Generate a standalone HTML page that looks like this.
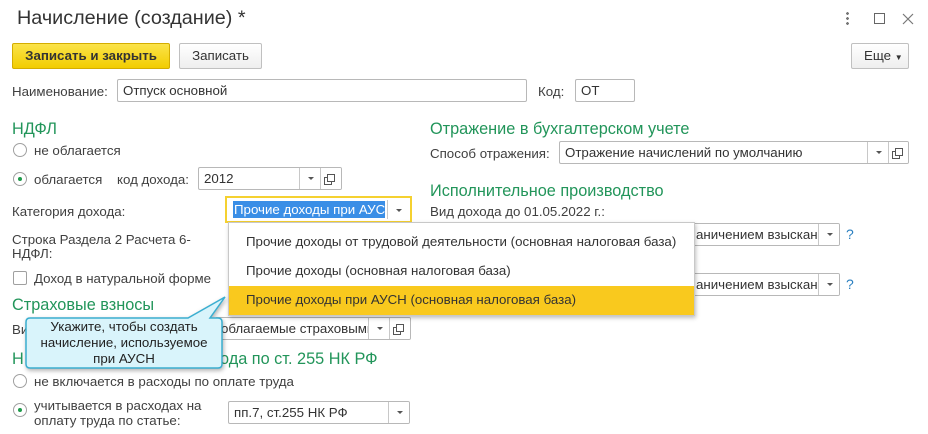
<!DOCTYPE html>
<html><head><meta charset="utf-8"><style>
*{box-sizing:border-box;margin:0;padding:0}
body{width:928px;height:434px;background:#fff;position:relative;overflow:hidden;font-family:"Liberation Sans",sans-serif;font-size:13.3px;color:#404040}
.a{position:absolute;white-space:nowrap}
.g{color:#22955a;font-size:16.3px}
.inp{position:absolute;border:1px solid #b8b8b8;border-radius:2px;background:#fff;height:23px;line-height:21px;padding-left:5px;color:#333;overflow:hidden;white-space:nowrap}
.btn{position:absolute;top:0;height:21px;width:21px;border-left:1px solid #c8c8c8;background:#fff}
.dd::after{content:"";position:absolute;left:8px;top:9px;border:3px solid transparent;border-top:3px solid #555}
.op::after{content:"";position:absolute;left:6px;top:6px;width:6px;height:6px;border:1px solid #555;box-shadow:-3px 3px 0 -1px #fff,-3px 3px 0 0 #555}
.rad{position:absolute;width:14px;height:14px;border:1px solid #a0a0a0;border-radius:50%;background:#fff}
.rad.on::after{content:"";position:absolute;left:4px;top:4px;width:4px;height:4px;border-radius:50%;background:#1f9a4a}
</style></head><body>
<div class="a" style="left:17px;top:7px;font-size:19.8px;color:#333">Начисление (создание) *</div>
<div class="a" style="left:846px;top:11px;width:3px;height:14px;background:radial-gradient(circle,#777 1.3px,transparent 1.5px) 0 0/3px 5px"></div>
<div class="a" style="left:874px;top:13px;width:11px;height:11px;border:1px solid #666"></div>
<svg class="a" style="left:902px;top:13px" width="12" height="12"><path d="M1,1 L11,11 M11,1 L1,11" stroke="#777" stroke-width="1.2"/></svg>
<div class="a" style="left:12px;top:43px;width:158px;height:26px;background:linear-gradient(#fbe34a,#f2cd00);border:1px solid #d4ad00;border-radius:2px;font-weight:bold;color:#333;text-align:center;line-height:24px">Записать и закрыть</div>
<div class="a" style="left:179px;top:43px;width:83px;height:26px;background:linear-gradient(#fff,#eee);border:1px solid #c0c0c0;border-radius:2px;text-align:center;line-height:24px;color:#333">Записать</div>
<div class="a" style="left:851px;top:43px;width:58px;height:26px;background:linear-gradient(#fff,#eee);border:1px solid #c0c0c0;border-radius:2px;line-height:24px;color:#333;padding-left:12px">Еще <span style="font-size:8px">▼</span></div>
<div class="a" style="left:12px;top:84px">Наименование:</div>
<div class="inp" style="left:117px;top:79px;width:410px">Отпуск основной</div>
<div class="a" style="left:538px;top:84px">Код:</div>
<div class="inp" style="left:575px;top:79px;width:60px">ОТ</div>
<div class="a g" style="left:12px;top:120px">НДФЛ</div>
<div class="rad" style="left:13px;top:143px"></div><div class="a" style="left:34px;top:143px">не облагается</div>
<div class="rad on" style="left:13px;top:172px"></div><div class="a" style="left:34px;top:172px">облагается</div>
<div class="a" style="left:117px;top:172px">код дохода:</div>
<div class="inp" style="left:198px;top:167px;width:144px">2012<div class="btn dd" style="left:100px"></div><div class="btn op" style="left:121px"></div></div>
<div class="a g" style="left:430px;top:120px">Отражение в бухгалтерском учете</div>
<div class="a" style="left:430px;top:146px">Способ отражения:</div>
<div class="inp" style="left:559px;top:141px;width:350px">Отражение начислений по умолчанию<div class="btn dd" style="left:307px"></div><div class="btn op" style="left:328px"></div></div>
<div class="a g" style="left:430px;top:182px">Исполнительное производство</div>
<div class="a" style="left:430px;top:204px">Вид дохода до 01.05.2022 г.:</div>
<div class="inp" style="left:600px;top:223px;width:240px;padding-left:95px">аничением взыскан<div class="btn dd" style="left:217px"></div></div>
<div class="a" style="left:846px;top:226px;color:#2a7fc0;font-size:14px">?</div>
<div class="inp" style="left:600px;top:273px;width:240px;padding-left:95px">аничением взыскан<div class="btn dd" style="left:217px"></div></div>
<div class="a" style="left:846px;top:276px;color:#2a7fc0;font-size:14px">?</div>
<div class="a" style="left:12px;top:204px">Категория дохода:</div>
<div class="a" style="left:225px;top:196px;width:187px;height:27px;border:2px solid #f5d130;background:#fff;overflow:hidden">
<div class="a" style="left:6px;top:3px;background:#3a8ee6;color:#fff;line-height:17px;padding:0 1px;width:152px;overflow:hidden">Прочие доходы при АУС</div>
<div class="btn dd" style="left:160px;top:2px;height:19px"></div></div>
<div class="a" style="left:12px;top:232px">Строка Раздела 2 Расчета 6-</div>
<div class="a" style="left:12px;top:246px">НДФЛ:</div>
<div class="a" style="left:13px;top:271px;width:14px;height:14px;border:1px solid #a0a0a0;border-radius:2px"></div>
<div class="a" style="left:34px;top:271px">Доход в натуральной форме</div>
<div class="a g" style="left:12px;top:296px">Страховые взносы</div>
<div class="a" style="left:12px;top:322px">Вид</div>
<div class="inp" style="left:215px;top:317px;width:196px">облагаемые страховыми<div class="btn dd" style="left:152px"></div><div class="btn op" style="left:173px"></div></div>
<div class="a g" style="left:12px;top:350px">Н</div>
<div class="a g" style="left:220px;top:350px">ода по ст. 255 НК РФ</div>
<div class="rad" style="left:13px;top:374px"></div><div class="a" style="left:34px;top:374px">не включается в расходы по оплате труда</div>
<div class="rad on" style="left:13px;top:403px"></div><div class="a" style="left:34px;top:398px">учитывается в расходах на</div><div class="a" style="left:34px;top:413px">оплату труда по статье:</div>
<div class="inp" style="left:228px;top:401px;width:182px">пп.7, ст.255 НК РФ<div class="btn dd" style="left:159px"></div></div>
<div class="a" style="left:228px;top:222px;width:467px;height:94px;background:#fff;border:1px solid #c8c8c8;box-shadow:1px 2px 4px rgba(0,0,0,.25)">
<div class="a" style="left:17px;top:11px;color:#333">Прочие доходы от трудовой деятельности (основная налоговая база)</div>
<div class="a" style="left:17px;top:40px;color:#333">Прочие доходы (основная налоговая база)</div>
<div class="a" style="left:0;top:63px;width:465px;height:29px;background:#f9c91e"></div>
<div class="a" style="left:17px;top:69px;color:#333">Прочие доходы при АУСН (основная налоговая база)</div>
</div>
<svg class="a" style="left:0;top:0" width="928" height="434">
<path d="M30,318 H188 L225,297 L210,318 H218 Q222,318 222,322 V364 Q222,368 218,368 H30 Q26,368 26,364 V322 Q26,318 30,318 Z" fill="#d9f4fb" stroke="#3aaed0" stroke-width="1.5" style="filter:drop-shadow(1px 2px 2px rgba(0,0,0,.3))"/>
</svg>
<div class="a" style="left:26px;top:319px;width:196px;text-align:center;color:#222;line-height:16px">Укажите, чтобы создать<br>начисление, используемое<br>при АУСН</div>
</body></html>
